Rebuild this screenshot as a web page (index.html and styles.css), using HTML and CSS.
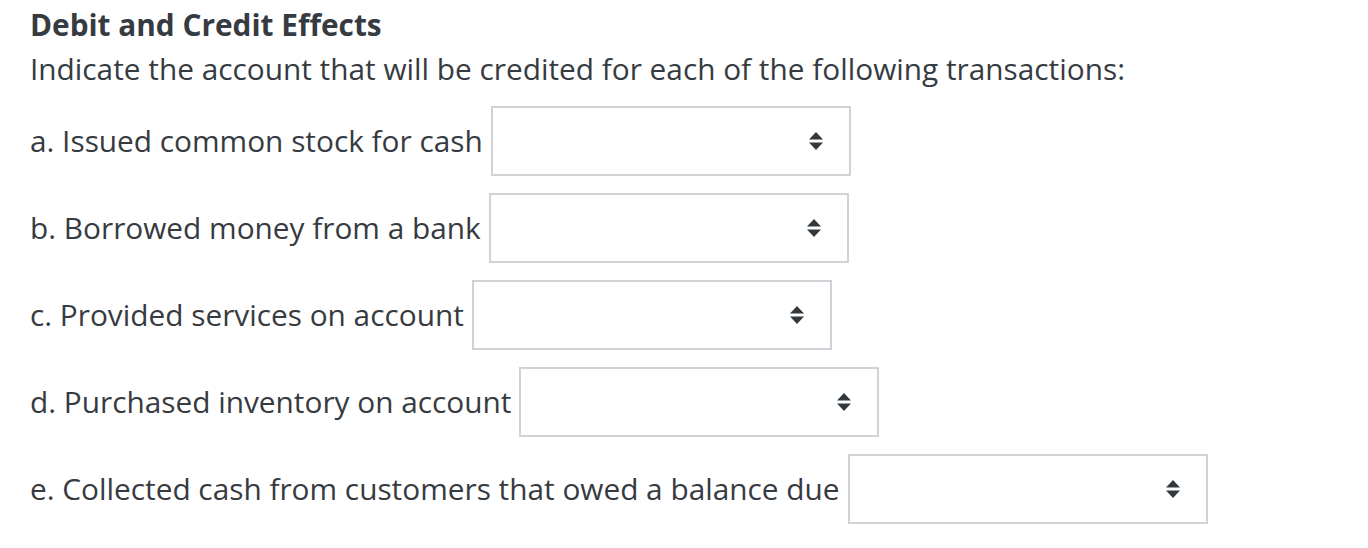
FILE: index.html
```html
<!DOCTYPE html>
<html>
<head>
<meta charset="utf-8">
<link rel="stylesheet" href="styles.css">
</head>
<body>
<div class="page">
  <h1 class="title">Debit and Credit Effects</h1>
  <p class="intro">Indicate the account that will be credited for each of the following transactions:</p>
  <div class="rows">
    <div class="row"><span class="label">a. Issued common stock for cash</span><div class="select"><svg class="arrows" viewBox="0 0 14 18" width="14" height="18"><path d="M7 0 L14 7.5 L0 7.5 Z M0 10.5 L14 10.5 L7 18 Z" fill="#33383d"/></svg></div></div>
    <div class="row"><span class="label">b. Borrowed money from a bank</span><div class="select"><svg class="arrows" viewBox="0 0 14 18" width="14" height="18"><path d="M7 0 L14 7.5 L0 7.5 Z M0 10.5 L14 10.5 L7 18 Z" fill="#33383d"/></svg></div></div>
    <div class="row"><span class="label">c. Provided services on account</span><div class="select"><svg class="arrows" viewBox="0 0 14 18" width="14" height="18"><path d="M7 0 L14 7.5 L0 7.5 Z M0 10.5 L14 10.5 L7 18 Z" fill="#33383d"/></svg></div></div>
    <div class="row"><span class="label">d. Purchased inventory on account</span><div class="select"><svg class="arrows" viewBox="0 0 14 18" width="14" height="18"><path d="M7 0 L14 7.5 L0 7.5 Z M0 10.5 L14 10.5 L7 18 Z" fill="#33383d"/></svg></div></div>
    <div class="row"><span class="label">e. Collected cash from customers that owed a balance due</span><div class="select"><svg class="arrows" viewBox="0 0 14 18" width="14" height="18"><path d="M7 0 L14 7.5 L0 7.5 Z M0 10.5 L14 10.5 L7 18 Z" fill="#33383d"/></svg></div></div>
  </div>
</div>
</body>
</html>
```
FILE: styles.css
```css
html, body {
  margin: 0;
  padding: 0;
  background: #ffffff;
}
.page {
  padding: 5px 0 0 30px;
  font-family: "Open Sans", "Liberation Sans", sans-serif;
  color: #363b41;
}
.title {
  margin: 0;
  font-size: 29.8px;
  font-weight: 700;
  line-height: 40px;
}
.intro {
  margin: 4px 0 0 0;
  font-size: 29.8px;
  font-weight: 400;
  line-height: 40px;
}
.rows {
  display: flex;
  flex-direction: column;
  gap: 17px;
  margin-top: 17px;
}
.row {
  display: flex;
  align-items: center;
  gap: 8px;
  height: 70px;
}
.label {
  font-size: 29.8px;
  line-height: 40px;
  white-space: nowrap;
}
.select {
  box-sizing: border-box;
  width: 360px;
  height: 70px;
  border: 2px solid #cfd3d8;
  background: #fff;
  display: flex;
  align-items: center;
  justify-content: flex-end;
  padding-right: 26px;
}
.arrows {
  display: block;
}
```
